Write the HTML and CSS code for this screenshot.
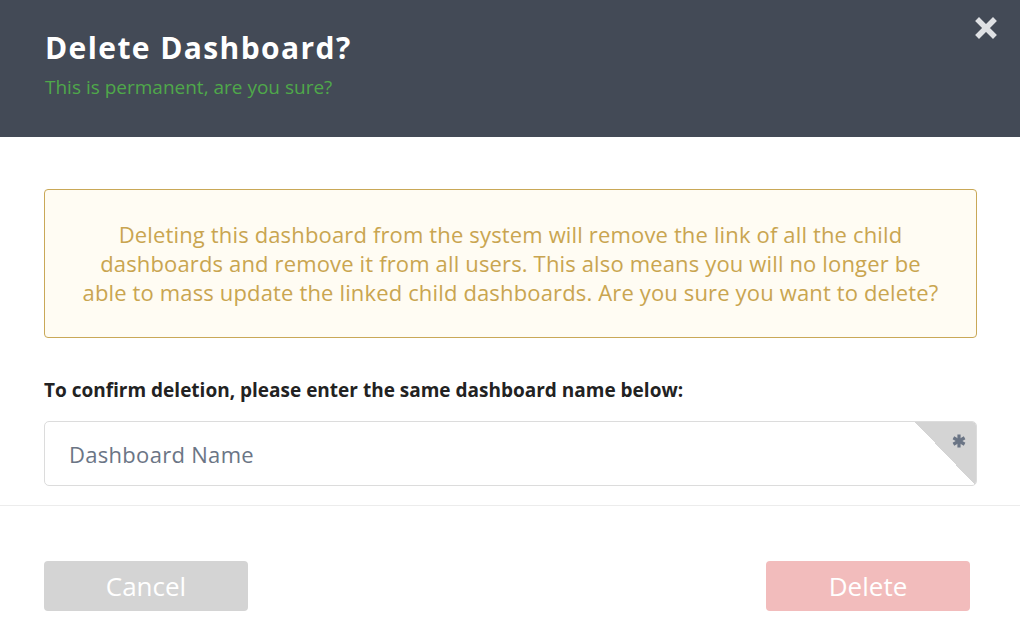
FILE: index.html
```html
<!DOCTYPE html>
<html lang="en">
<head>
<meta charset="utf-8">
<title>Delete Dashboard</title>
<link rel="stylesheet" href="styles.css">
</head>
<body>
<div class="modal">
  <header class="modal-header">
    <h1 class="title">Delete Dashboard?</h1>
    <p class="subtitle">This is permanent, are you sure?</p>
    <button class="close" aria-label="Close">
      <svg width="22" height="22" viewBox="0 0 22 22"><path d="M4 4 L18 18 M18 4 L4 18" stroke="#dfe1e4" stroke-width="5.5" stroke-linecap="square" fill="none"/></svg>
    </button>
  </header>
  <main class="modal-body">
    <div class="warning">Deleting this dashboard from the system will remove the link of all the child<br> dashboards and remove it from all users. This also means you will no longer be<br> able to mass update the linked child dashboards. Are you sure you want to delete?</div>
    <label class="confirm-label" for="dn">To confirm deletion, please enter the same dashboard name below:</label>
    <div class="input-wrap">
      <input id="dn" class="input" type="text" placeholder="Dashboard Name">
      <span class="required">
        <svg width="14" height="14" viewBox="0 0 14 14"><g stroke="#6b7585" stroke-width="3.2" stroke-linecap="butt"><path d="M7 0.5 V13.5"/><path d="M1.4 3.75 L12.6 10.25"/><path d="M12.6 3.75 L1.4 10.25"/></g></svg>
      </span>
    </div>
  </main>
  <footer class="modal-footer">
    <button class="btn btn-cancel">Cancel</button>
    <button class="btn btn-delete">Delete</button>
  </footer>
</div>
</body>
</html>
```

FILE: styles.css
```css
* { box-sizing: border-box; }
html, body { margin: 0; padding: 0; background: #fff; }
body { font-family: "Open Sans", "Noto Sans", sans-serif; width: 1020px; height: 638px; overflow: hidden; }

.modal { display: flex; flex-direction: column; height: 638px; }

.modal-header {
  position: relative;
  background: #434a56;
  height: 137px;
  padding: 29px 45px 0;
}
.title {
  margin: 0;
  color: #fff;
  font-size: 30px;
  font-weight: 700;
  letter-spacing: 1.4px;
  line-height: 38px;
}
.subtitle {
  margin: 8px 0 0;
  color: #4fa84a;
  font-size: 19px;
  line-height: 24px;
}
.close {
  position: absolute;
  top: 17px;
  right: 23px;
  width: 22px;
  height: 22px;
  padding: 0;
  border: 0;
  background: none;
  display: block;
}
.close svg { display: block; }

.modal-body {
  padding: 52px 43px 19px 44px;
  border-bottom: 1px solid #ececec;
}
.warning {
  border: 1px solid #c9a857;
  border-radius: 4px;
  background: #fffcf3;
  color: #c9a550;
  font-size: 22px;
  letter-spacing: 0.15px;
  line-height: 29px;
  text-align: center;
  padding: 30px 10px;
  height: 149px;
  white-space: nowrap;
}
.confirm-label {
  display: block;
  margin-top: 41px;
  color: #222;
  font-size: 19px;
  font-weight: 700;
  line-height: 22px;
  height: 22px;
}
.input-wrap {
  position: relative;
  margin-top: 20px;
  height: 65px;
  border: 1px solid #dcdcdc;
  border-radius: 5px;
  overflow: hidden;
}
.input {
  display: block;
  width: 100%;
  height: 100%;
  border: 0;
  outline: none;
  padding: 0 24px;
  font-family: inherit;
  font-size: 22px;
  letter-spacing: 0.3px;
  color: #333;
  background: transparent;
}
.input::placeholder { color: #6b7585; }
.required {
  position: absolute;
  top: 0;
  right: 0;
  width: 61px;
  height: 64px;
  background: linear-gradient(to top right, transparent 50%, #d4d4d4 50%);
}
.required svg {
  position: absolute;
  top: 12px;
  right: 10px;
}

.modal-footer {
  flex: 1;
  display: flex;
  justify-content: space-between;
  align-items: flex-start;
  padding: 55px 50px 0 44px;
}
.btn {
  width: 204px;
  height: 50px;
  border: 0;
  border-radius: 4px;
  color: #fff;
  font-family: inherit;
  font-size: 26px;
  font-weight: 400;
  padding: 0;
}
.btn-cancel { background: #d4d4d4; }
.btn-delete { background: #f2bcbc; }
```
